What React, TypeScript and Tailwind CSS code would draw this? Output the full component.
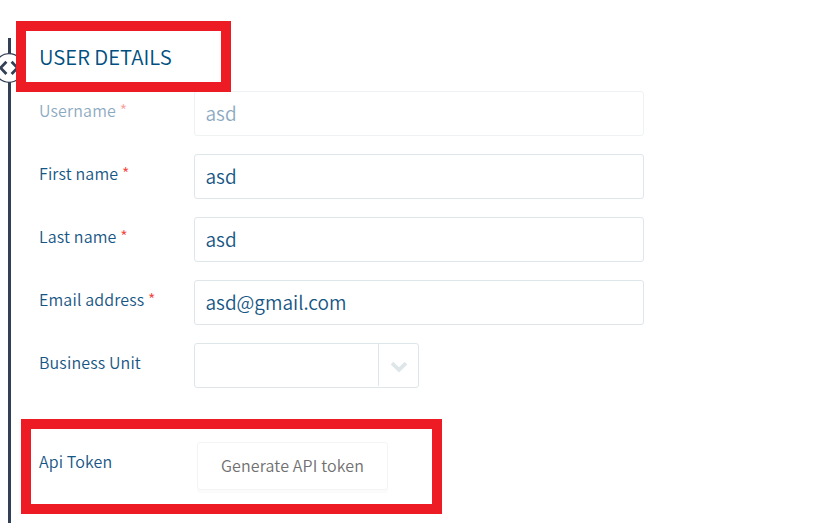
import type { ReactNode } from "react";

type RowProps = {
  label: string;
  required?: boolean;
  disabled?: boolean;
  children: ReactNode;
};

function Row({ label, required, disabled, children }: RowProps) {
  return (
    <div className={`flex h-[45px] items-start ${disabled ? "opacity-50" : ""}`}>
      <label className="w-[155px] shrink-0 pt-[7px] text-[16px] leading-[24px] tracking-[0.15px] whitespace-pre">
        {label}
        {required && <span className="text-[#f4483f]"> *</span>}
      </label>
      {children}
    </div>
  );
}

function Field({ value }: { value: string }) {
  return (
    <div className="flex h-[45px] w-[450px] items-center rounded-[3px] border border-[#dfe6e9] px-[10.5px] pb-[1px] text-[19px] leading-[28px]">
      <span>{value}</span>
    </div>
  );
}

function Rail() {
  return (
    <div className="relative w-[39px] shrink-0 pt-[38px] pl-[8px]">
      <div className="h-[485px] w-[3px] bg-[#333f55]" />
      <svg className="absolute top-[52px] left-[-7px]" width="32" height="32" viewBox="0 0 32 32" fill="none">
        <circle cx="16" cy="16" r="14.3" fill="#fff" stroke="#333f55" strokeWidth="1.3" />
        <path d="M13.4 9.8 7.6 15.9l5.8 6.1M18.6 9.8l5.8 6.1-5.8 6.1" stroke="#333f55" strokeWidth="2.8" />
      </svg>
    </div>
  );
}

export default function App() {
  return (
    <div className="relative flex h-[523px] w-[814px] overflow-hidden bg-white font-['Noto_Sans_CJK_SC',sans-serif] font-[350] text-[#165684]">
      <Rail />
      <main className="flex flex-col">
        <h1 className="mt-[41px] h-[30px] text-[20.3px] leading-[30px] font-[350] text-[#004f80]">USER DETAILS</h1>
        <div className="mt-[20px] flex flex-col gap-[18px]">
          <Row label="Username" required disabled>
            <Field value="asd" />
          </Row>
          <Row label="First name" required>
            <Field value="asd" />
          </Row>
          <Row label="Last name" required>
            <Field value="asd" />
          </Row>
          <Row label="Email address" required>
            <Field value="asd@gmail.com" />
          </Row>
          <Row label="Business Unit">
            <div className="flex h-[45px] w-[225px] justify-end rounded-[3px] border border-[#dfe6e9]">
              <div className="flex h-[42px] w-[40px] items-center justify-center border-l border-[#dfe6e9]">
                <svg width="18" height="12" viewBox="0 0 18 12" fill="none" className="mt-[3px]">
                  <path d="M2 2.2 9 8.8l7-6.6" stroke="#dfe6e9" strokeWidth="3.8" />
                </svg>
              </div>
            </div>
          </Row>
        </div>
        <div className="mt-[54px] flex items-start">
          <span className="w-[158px] pt-[7px] text-[16px] leading-[24px] tracking-[0.12px]">Api Token</span>
          <button className="h-[48px] w-[191px] rounded-[3px] border border-[#f4f4f4] pb-[2px] text-[16px] leading-[24px] tracking-[0.14px] text-[#707070] shadow-[0_3px_0_#fbfbfb]">
            Generate API token
          </button>
        </div>
      </main>
      <div className="absolute top-[21px] left-[16px] h-[71px] w-[215px] border-10 border-[#ed1c24]" />
      <div className="absolute top-[419px] left-[21px] h-[95px] w-[421px] border-10 border-[#ed1c24]" />
    </div>
  );
}
